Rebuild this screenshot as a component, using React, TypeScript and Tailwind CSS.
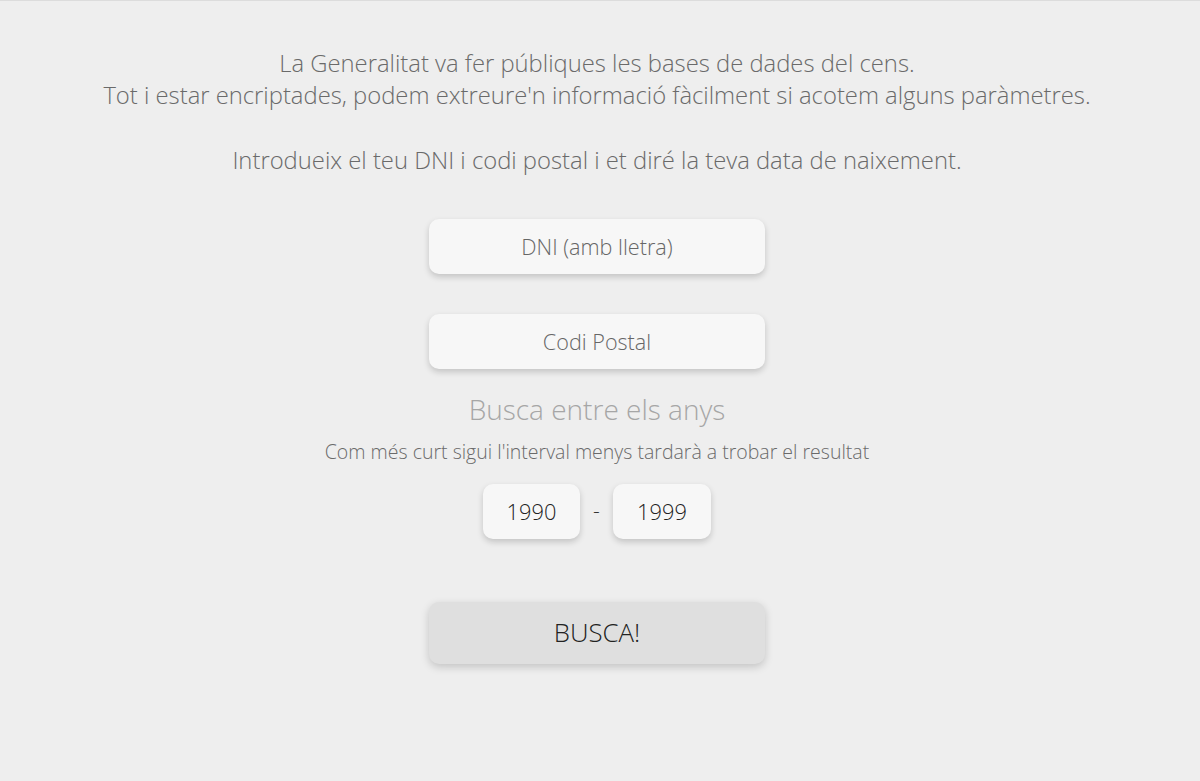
export default function App() {
  const font = { fontFamily: '"Open Sans", "Liberation Sans", sans-serif' }
  return (
    <div
      style={font}
      className="min-h-[781px] w-full bg-[#eeeeee] border-t border-[#dcdcdc] font-light pr-[6px] flex flex-col items-center"
    >
      <p className="mt-[46px] text-center text-[23.8px] leading-[32.4px] text-[#6a6a6a]">
        La Generalitat va fer públiques les bases de dades del cens.
        <br />
        Tot i estar encriptades, podem extreure'n informació fàcilment si acotem alguns paràmetres.
        <br />
        <br />
        Introdueix el teu DNI i codi postal i et diré la teva data de naixement.
      </p>

      <input
        placeholder="DNI (amb lletra)"
        className="mt-[42px] w-[336px] h-[55px] rounded-[10px] bg-[#f7f7f7] text-center text-[21.6px] font-light text-[#555] placeholder:text-[#666] shadow-[0_3px_6px_rgba(0,0,0,0.18)] outline-none"
      />
      <input
        placeholder="Codi Postal"
        className="mt-[40px] w-[336px] h-[55px] rounded-[10px] bg-[#f7f7f7] text-center text-[21.6px] font-light text-[#555] placeholder:text-[#666] shadow-[0_3px_6px_rgba(0,0,0,0.18)] outline-none"
      />

      <h2 className="mt-[22px] text-[28px] leading-[36px] font-light text-[#a6a6a6]">Busca entre els anys</h2>
      <p className="mt-[11px] text-[19.5px] leading-[28px] text-[#6a6a6a]">
        Com més curt sigui l'interval menys tardarà a trobar el resultat
      </p>

      <div className="mt-[18px] flex items-center gap-[10px]">
        <input
          defaultValue="1990"
          className="w-[97px] h-[55px] rounded-[10px] bg-[#f7f7f7] text-center text-[21.8px] font-light text-[#222] shadow-[0_3px_6px_rgba(0,0,0,0.18)] outline-none"
        />
        <span className="w-[13px] text-center text-[21px] text-[#333]">-</span>
        <input
          defaultValue="1999"
          className="w-[98px] h-[55px] rounded-[10px] bg-[#f7f7f7] text-center text-[21.8px] font-light text-[#222] shadow-[0_3px_6px_rgba(0,0,0,0.18)] outline-none"
        />
      </div>

      <button className="mt-[63px] w-[336px] h-[62px] rounded-[10px] bg-[#dfdfdf] text-[25.8px] font-light text-[#222] shadow-[0_3px_8px_rgba(0,0,0,0.18)]">
        BUSCA!
      </button>
    </div>
  )
}
